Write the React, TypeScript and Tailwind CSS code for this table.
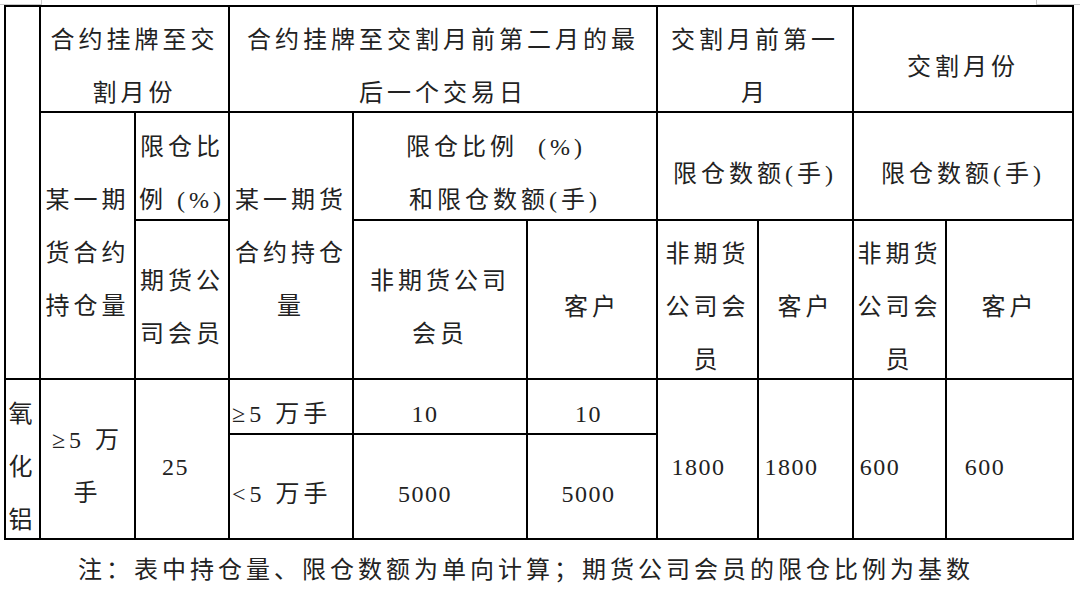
import React from "react"

const cell =
  "flex flex-col items-center justify-center pt-[16px] border-r-2 border-b-2 border-black whitespace-nowrap"

// latin runs (digits, brackets) use the serif face, like the original document
const num = "font-['Liberation_Serif',serif] tracking-[1.5px]"

function Lines({ lines }: { lines: string[] }) {
  return (
    <>
      {lines.map((l, i) => (
        <span key={i} className="block">
          {l}
        </span>
      ))}
    </>
  )
}

export default function App() {
  return (
    <div className="w-[1080px] h-[607px] bg-white text-[#222] text-[24px] leading-[53px] tracking-[4px] font-['Liberation_Serif','Noto_Sans_CJK_SC',serif] overflow-hidden">
      {/* corner marks of the page */}
      <div className="flex justify-between h-[5px]">
        <div className="w-[42px] h-[5px] border-r border-b border-[#c8c8c8]" />
        <div className="w-[44px] h-[5px] border-l border-b border-[#c8c8c8]" />
      </div>

      <div className="ml-[4px] w-[1070px] border-l-2 border-t-2 border-black grid grid-cols-[35px_95px_94px_124px_174px_130px_101px_95px_93px_127px] grid-rows-[106px_108px_159px_55px_105px]">
        {/* header row 1 */}
        <div className={`${cell} col-start-1 row-start-1 row-span-3`} />
        <div className={`${cell} col-start-2 col-span-2 row-start-1`}>
          <Lines lines={["合约挂牌至交", "割月份"]} />
        </div>
        <div className={`${cell} col-start-4 col-span-3 row-start-1`}>
          <Lines lines={["合约挂牌至交割月前第二月的最", "后一个交易日"]} />
        </div>
        <div className={`${cell} col-start-7 col-span-2 row-start-1`}>
          <Lines lines={["交割月前第一", "月"]} />
        </div>
        <div className={`${cell} col-start-9 col-span-2 row-start-1`}>
          <Lines lines={["交割月份"]} />
        </div>

        {/* header row 2 */}
        <div className={`${cell} col-start-2 row-start-2 row-span-2`}>
          <Lines lines={["某一期", "货合约", "持仓量"]} />
        </div>
        <div className={`${cell} col-start-3 row-start-2`}>
          <Lines lines={["限仓比", "例 (%)"]} />
        </div>
        <div className={`${cell} col-start-4 row-start-2 row-span-2`}>
          <Lines lines={["某一期货", "合约持仓", "量"]} />
        </div>
        <div className={`${cell} col-start-5 col-span-2 row-start-2`}>
          <span className="block pr-[18px]">限仓比例{"\u00a0\u00a0"}(%)</span>
          <span className="block">和限仓数额(手)</span>
        </div>
        <div className={`${cell} col-start-7 col-span-2 row-start-2`}>
          <Lines lines={["限仓数额(手)"]} />
        </div>
        <div className={`${cell} col-start-9 col-span-2 row-start-2`}>
          <Lines lines={["限仓数额(手)"]} />
        </div>

        {/* header row 3 */}
        <div className={`${cell} col-start-3 row-start-3`}>
          <Lines lines={["期货公", "司会员"]} />
        </div>
        <div className={`${cell} col-start-5 row-start-3`}>
          <Lines lines={["非期货公司", "会员"]} />
        </div>
        <div className={`${cell} col-start-6 row-start-3`}>
          <Lines lines={["客户"]} />
        </div>
        <div className={`${cell} col-start-7 row-start-3`}>
          <Lines lines={["非期货", "公司会", "员"]} />
        </div>
        <div className={`${cell} col-start-8 row-start-3`}>
          <Lines lines={["客户"]} />
        </div>
        <div className={`${cell} col-start-9 row-start-3`}>
          <Lines lines={["非期货", "公司会", "员"]} />
        </div>
        <div className={`${cell} col-start-10 row-start-3`}>
          <Lines lines={["客户"]} />
        </div>

        {/* data */}
        <div className={`${cell} col-start-1 row-start-4 row-span-2`}>
          <Lines lines={["氧", "化", "铝"]} />
        </div>
        <div className={`${cell} col-start-2 row-start-4 row-span-2`}>
          <Lines lines={["≥5 万", "手"]} />
        </div>
        <div className={`${cell} ${num} col-start-3 row-start-4 row-span-2 pr-[13px]`}>25</div>
        <div className={`${cell} col-start-4 row-start-4 !items-start pl-[2px]`}>≥5 万手</div>
        <div className={`${cell} ${num} col-start-5 row-start-4 pr-[30px]`}>10</div>
        <div className={`${cell} ${num} col-start-6 row-start-4 pr-[7px]`}>10</div>
        <div className={`${cell} ${num} col-start-7 row-start-4 row-span-2 pr-[18px]`}>1800</div>
        <div className={`${cell} ${num} col-start-8 row-start-4 row-span-2 pr-[28px]`}>1800</div>
        <div className={`${cell} ${num} col-start-9 row-start-4 row-span-2 pr-[39px]`}>600</div>
        <div className={`${cell} ${num} col-start-10 row-start-4 row-span-2 pr-[49px]`}>600</div>

        <div className={`${cell} col-start-4 row-start-5 !items-start pl-[2px]`}>&lt;5 万手</div>
        <div className={`${cell} ${num} col-start-5 row-start-5 pr-[30px]`}>5000</div>
        <div className={`${cell} ${num} col-start-6 row-start-5 pr-[7px]`}>5000</div>
      </div>

      <p className="pl-[78px] pt-[4px] whitespace-nowrap">
        注：表中持仓量、限仓数额为单向计算；期货公司会员的限仓比例为基数
      </p>
    </div>
  )
}
